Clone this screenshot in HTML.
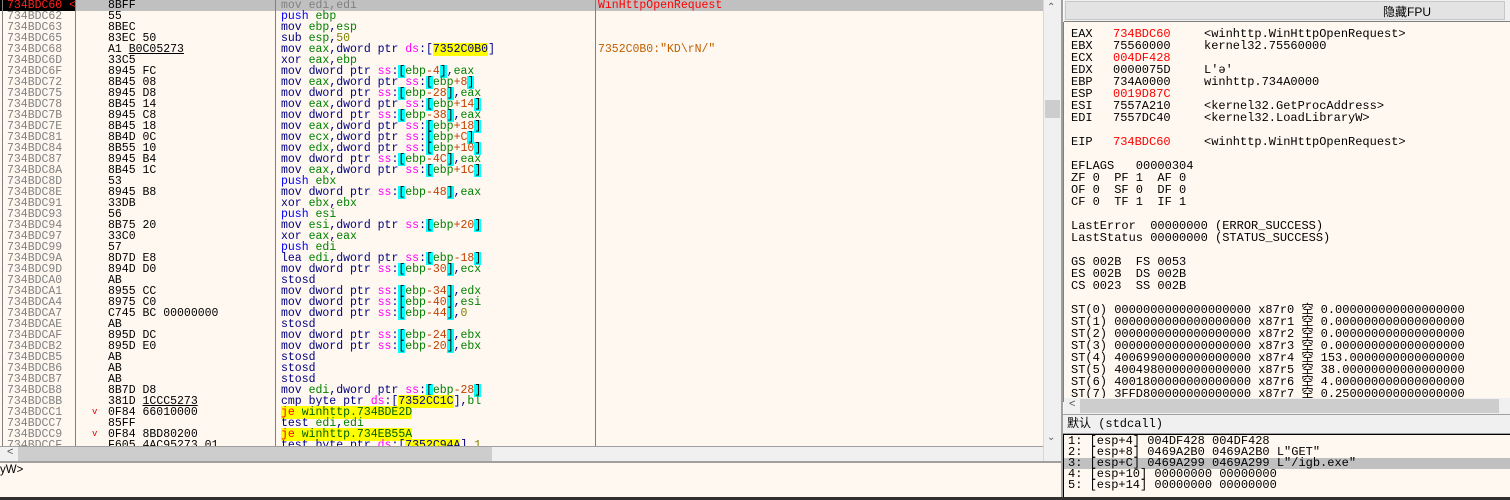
<!DOCTYPE html>
<html><head><meta charset="utf-8"><style>
*{margin:0;padding:0;box-sizing:border-box}
body{width:1510px;height:500px;overflow:hidden;background:#fff8f0;position:relative;font-family:"Liberation Mono","Noto Sans CJK SC",monospace}
.a{position:absolute}
#dis{position:absolute;left:0;top:0;width:1043px;height:446px;overflow:hidden;background:#fff8f0;font-size:11.5px}
.r{position:absolute;left:0;width:1043px;height:11px;line-height:11px;white-space:pre}
.ad{position:absolute;left:7px;color:#808080}
.by{position:absolute;left:108px;color:#000}
.ar{position:absolute;left:92px;color:#e00000;font-size:9px}
.ds{position:absolute;left:281px;color:#000080}
.cm{position:absolute;left:598px}
.g{color:#008000}.p{color:#0000ff}.s{color:#ff00ff}.b{background:#00ffff;color:#000}.o{color:#c04000}.n{color:#808000}.y{background:#ffff00}.j{color:#ff0000;background:#ffff00}.k{color:#006000;background:#ffff00}
.vl{position:absolute;top:0;width:1px;height:446px;background:#808080}
#reg{position:absolute;left:1064px;top:22px;width:446px;height:376px;overflow:hidden;font-size:12px}
.l{position:absolute;height:12px;line-height:12px;white-space:pre}
</style></head><body>
<div id="dis">
<div class="r" style="top:0;background:#c0c0c0"></div>
<div class="a" style="left:0;top:0;width:75px;height:11px;background:#000"></div>
<div class="vl" style="left:2px"></div>
<div class="vl" style="left:75px"></div>
<div class="vl" style="left:275px"></div>
<div class="vl" style="left:595px"></div>

<div class="r" style="top:0"><span class="ad" style="color:#ff2020">734BDC60 &lt;</span><span class="by">8BFF</span><span class="ds" style="color:#808080">mov edi,edi</span><span class="cm" style="color:#ff0000">WinHttpOpenRequest</span></div>
<div class="r" style="top:11px"><span class="ad">734BDC62</span><span class="by">55</span><span class="ds"><span class="p">push</span> <span class="g">ebp</span></span></div>
<div class="r" style="top:22px"><span class="ad">734BDC63</span><span class="by">8BEC</span><span class="ds">mov <span class="g">ebp</span>,<span class="g">esp</span></span></div>
<div class="r" style="top:33px"><span class="ad">734BDC65</span><span class="by">83EC 50</span><span class="ds">sub <span class="g">esp</span>,<span class="n">50</span></span></div>
<div class="r" style="top:44px"><span class="ad">734BDC68</span><span class="by">A1 <u>B0C05273</u></span><span class="ds">mov <span class="g">eax</span>,dword ptr <span class="s">ds</span>:[<span class="y">7352C0B0</span>]</span><span class="cm" style="color:#c06000">7352C0B0:"KD\rN/"</span></div>
<div class="r" style="top:55px"><span class="ad">734BDC6D</span><span class="by">33C5</span><span class="ds">xor <span class="g">eax</span>,<span class="g">ebp</span></span></div>
<div class="r" style="top:66px"><span class="ad">734BDC6F</span><span class="by">8945 FC</span><span class="ds">mov dword ptr <span class="s">ss</span>:<span class="b">[</span><span class="g">ebp</span><span class="o">-4</span><span class="b">]</span>,<span class="g">eax</span></span></div>
<div class="r" style="top:77px"><span class="ad">734BDC72</span><span class="by">8B45 08</span><span class="ds">mov <span class="g">eax</span>,dword ptr <span class="s">ss</span>:<span class="b">[</span><span class="g">ebp</span><span class="o">+8</span><span class="b">]</span></span></div>
<div class="r" style="top:88px"><span class="ad">734BDC75</span><span class="by">8945 D8</span><span class="ds">mov dword ptr <span class="s">ss</span>:<span class="b">[</span><span class="g">ebp</span><span class="o">-28</span><span class="b">]</span>,<span class="g">eax</span></span></div>
<div class="r" style="top:99px"><span class="ad">734BDC78</span><span class="by">8B45 14</span><span class="ds">mov <span class="g">eax</span>,dword ptr <span class="s">ss</span>:<span class="b">[</span><span class="g">ebp</span><span class="o">+14</span><span class="b">]</span></span></div>
<div class="r" style="top:110px"><span class="ad">734BDC7B</span><span class="by">8945 C8</span><span class="ds">mov dword ptr <span class="s">ss</span>:<span class="b">[</span><span class="g">ebp</span><span class="o">-38</span><span class="b">]</span>,<span class="g">eax</span></span></div>
<div class="r" style="top:121px"><span class="ad">734BDC7E</span><span class="by">8B45 18</span><span class="ds">mov <span class="g">eax</span>,dword ptr <span class="s">ss</span>:<span class="b">[</span><span class="g">ebp</span><span class="o">+18</span><span class="b">]</span></span></div>
<div class="r" style="top:132px"><span class="ad">734BDC81</span><span class="by">8B4D 0C</span><span class="ds">mov <span class="g">ecx</span>,dword ptr <span class="s">ss</span>:<span class="b">[</span><span class="g">ebp</span><span class="o">+C</span><span class="b">]</span></span></div>
<div class="r" style="top:143px"><span class="ad">734BDC84</span><span class="by">8B55 10</span><span class="ds">mov <span class="g">edx</span>,dword ptr <span class="s">ss</span>:<span class="b">[</span><span class="g">ebp</span><span class="o">+10</span><span class="b">]</span></span></div>
<div class="r" style="top:154px"><span class="ad">734BDC87</span><span class="by">8945 B4</span><span class="ds">mov dword ptr <span class="s">ss</span>:<span class="b">[</span><span class="g">ebp</span><span class="o">-4C</span><span class="b">]</span>,<span class="g">eax</span></span></div>
<div class="r" style="top:165px"><span class="ad">734BDC8A</span><span class="by">8B45 1C</span><span class="ds">mov <span class="g">eax</span>,dword ptr <span class="s">ss</span>:<span class="b">[</span><span class="g">ebp</span><span class="o">+1C</span><span class="b">]</span></span></div>
<div class="r" style="top:176px"><span class="ad">734BDC8D</span><span class="by">53</span><span class="ds"><span class="p">push</span> <span class="g">ebx</span></span></div>
<div class="r" style="top:187px"><span class="ad">734BDC8E</span><span class="by">8945 B8</span><span class="ds">mov dword ptr <span class="s">ss</span>:<span class="b">[</span><span class="g">ebp</span><span class="o">-48</span><span class="b">]</span>,<span class="g">eax</span></span></div>
<div class="r" style="top:198px"><span class="ad">734BDC91</span><span class="by">33DB</span><span class="ds">xor <span class="g">ebx</span>,<span class="g">ebx</span></span></div>
<div class="r" style="top:209px"><span class="ad">734BDC93</span><span class="by">56</span><span class="ds"><span class="p">push</span> <span class="g">esi</span></span></div>
<div class="r" style="top:220px"><span class="ad">734BDC94</span><span class="by">8B75 20</span><span class="ds">mov <span class="g">esi</span>,dword ptr <span class="s">ss</span>:<span class="b">[</span><span class="g">ebp</span><span class="o">+20</span><span class="b">]</span></span></div>
<div class="r" style="top:231px"><span class="ad">734BDC97</span><span class="by">33C0</span><span class="ds">xor <span class="g">eax</span>,<span class="g">eax</span></span></div>
<div class="r" style="top:242px"><span class="ad">734BDC99</span><span class="by">57</span><span class="ds"><span class="p">push</span> <span class="g">edi</span></span></div>
<div class="r" style="top:253px"><span class="ad">734BDC9A</span><span class="by">8D7D E8</span><span class="ds">lea <span class="g">edi</span>,dword ptr <span class="s">ss</span>:<span class="b">[</span><span class="g">ebp</span><span class="o">-18</span><span class="b">]</span></span></div>
<div class="r" style="top:264px"><span class="ad">734BDC9D</span><span class="by">894D D0</span><span class="ds">mov dword ptr <span class="s">ss</span>:<span class="b">[</span><span class="g">ebp</span><span class="o">-30</span><span class="b">]</span>,<span class="g">ecx</span></span></div>
<div class="r" style="top:275px"><span class="ad">734BDCA0</span><span class="by">AB</span><span class="ds">stosd</span></div>
<div class="r" style="top:286px"><span class="ad">734BDCA1</span><span class="by">8955 CC</span><span class="ds">mov dword ptr <span class="s">ss</span>:<span class="b">[</span><span class="g">ebp</span><span class="o">-34</span><span class="b">]</span>,<span class="g">edx</span></span></div>
<div class="r" style="top:297px"><span class="ad">734BDCA4</span><span class="by">8975 C0</span><span class="ds">mov dword ptr <span class="s">ss</span>:<span class="b">[</span><span class="g">ebp</span><span class="o">-40</span><span class="b">]</span>,<span class="g">esi</span></span></div>
<div class="r" style="top:308px"><span class="ad">734BDCA7</span><span class="by">C745 BC 00000000</span><span class="ds">mov dword ptr <span class="s">ss</span>:<span class="b">[</span><span class="g">ebp</span><span class="o">-44</span><span class="b">]</span>,<span class="n">0</span></span></div>
<div class="r" style="top:319px"><span class="ad">734BDCAE</span><span class="by">AB</span><span class="ds">stosd</span></div>
<div class="r" style="top:330px"><span class="ad">734BDCAF</span><span class="by">895D DC</span><span class="ds">mov dword ptr <span class="s">ss</span>:<span class="b">[</span><span class="g">ebp</span><span class="o">-24</span><span class="b">]</span>,<span class="g">ebx</span></span></div>
<div class="r" style="top:341px"><span class="ad">734BDCB2</span><span class="by">895D E0</span><span class="ds">mov dword ptr <span class="s">ss</span>:<span class="b">[</span><span class="g">ebp</span><span class="o">-20</span><span class="b">]</span>,<span class="g">ebx</span></span></div>
<div class="r" style="top:352px"><span class="ad">734BDCB5</span><span class="by">AB</span><span class="ds">stosd</span></div>
<div class="r" style="top:363px"><span class="ad">734BDCB6</span><span class="by">AB</span><span class="ds">stosd</span></div>
<div class="r" style="top:374px"><span class="ad">734BDCB7</span><span class="by">AB</span><span class="ds">stosd</span></div>
<div class="r" style="top:385px"><span class="ad">734BDCB8</span><span class="by">8B7D D8</span><span class="ds">mov <span class="g">edi</span>,dword ptr <span class="s">ss</span>:<span class="b">[</span><span class="g">ebp</span><span class="o">-28</span><span class="b">]</span></span></div>
<div class="r" style="top:396px"><span class="ad">734BDCBB</span><span class="by">381D <u>1CCC5273</u></span><span class="ds">cmp byte ptr <span class="s">ds</span>:[<span class="y">7352CC1C</span>],<span class="g">bl</span></span></div>
<div class="r" style="top:407px"><span class="ad">734BDCC1</span><span class="ar">v</span><span class="by">0F84 66010000</span><span class="ds"><span class="j">je</span><span class="y"> </span><span class="k">winhttp.734BDE2D</span></span></div>
<div class="r" style="top:418px"><span class="ad">734BDCC7</span><span class="by">85FF</span><span class="ds">test <span class="g">edi</span>,<span class="g">edi</span></span></div>
<div class="r" style="top:429px"><span class="ad">734BDCC9</span><span class="ar">v</span><span class="by">0F84 8BD80200</span><span class="ds"><span class="j">je</span><span class="y"> </span><span class="k">winhttp.734EB55A</span></span></div>
<div class="r" style="top:440px"><span class="ad">734BDCCF</span><span class="by">F605 4AC95273 01</span><span class="ds">test byte ptr <span class="s">ds</span>:[<span class="y">7352C94A</span>],<span class="n">1</span></span></div>
</div>

<!-- disasm vertical scrollbar -->
<div class="a" style="left:1043px;top:0;width:18px;height:461px;background:#f0f0f0;border-left:1px solid #d8d8d8"></div>
<div class="a" style="left:1047px;top:2px;font-size:10px;color:#606060;font-family:'Liberation Sans',sans-serif">&#8963;</div>
<div class="a" style="left:1045px;top:100px;width:15px;height:18px;background:#cdcdcd"></div>
<div class="a" style="left:1047px;top:432px;font-size:10px;color:#606060;font-family:'Liberation Sans',sans-serif">&#8964;</div>
<div class="a" style="left:1061px;top:0;width:2px;height:500px;background:#a0a0a0"></div>

<!-- horizontal scrollbar -->
<div class="a" style="left:0;top:446px;width:1043px;height:15px;background:#f0f0f0;border-top:1px solid #a0a0a0"></div>
<div class="a" style="left:7px;top:446px;font-size:11px;color:#505050;font-family:'Liberation Sans',sans-serif">&lt;</div>
<div class="a" style="left:18px;top:447px;width:474px;height:14px;background:#cdcdcd"></div>
<div class="a" style="left:0;top:461px;width:1061px;height:2px;background:#a0a0a0"></div>
<div class="a" style="left:0;top:465px;font-size:11.5px;line-height:11px;color:#000;font-family:'Liberation Sans',sans-serif">yW&gt;</div>
<div class="a" style="left:0;top:497px;width:1510px;height:3px;background:#303030"></div>

<!-- right panel header -->
<div class="a" style="left:1064px;top:0;width:446px;height:22px;background:#f0f0f0;border-bottom:1px solid #808080"></div>
<div class="a" style="left:1065px;top:1px;width:440px;height:19px;background:#e3e3e3;border:1px solid #c8c8c8"></div>
<div class="a" style="left:1383px;top:3px;font-size:12px;font-family:'Liberation Sans','Noto Sans CJK SC',sans-serif">隐藏FPU</div>
<div class="a" style="left:1063px;top:22px;width:1px;height:380px;background:#808080"></div>

<div id="reg">
<div class="l" style="left:7px;top:6px">EAX</div><div class="l" style="left:49px;top:6px;color:#ff0000">734BDC60</div><div class="l" style="left:140px;top:6px">&lt;winhttp.WinHttpOpenRequest&gt;</div>
<div class="l" style="left:7px;top:18px">EBX</div><div class="l" style="left:49px;top:18px">75560000</div><div class="l" style="left:140px;top:18px">kernel32.75560000</div>
<div class="l" style="left:7px;top:30px">ECX</div><div class="l" style="left:49px;top:30px;color:#ff0000">004DF428</div>
<div class="l" style="left:7px;top:42px">EDX</div><div class="l" style="left:49px;top:42px">0000075D</div><div class="l" style="left:140px;top:42px">L'ǝ'</div>
<div class="l" style="left:7px;top:54px">EBP</div><div class="l" style="left:49px;top:54px">734A0000</div><div class="l" style="left:140px;top:54px">winhttp.734A0000</div>
<div class="l" style="left:7px;top:66px">ESP</div><div class="l" style="left:49px;top:66px;color:#ff0000">0019D87C</div>
<div class="l" style="left:7px;top:78px">ESI</div><div class="l" style="left:49px;top:78px">7557A210</div><div class="l" style="left:140px;top:78px">&lt;kernel32.GetProcAddress&gt;</div>
<div class="l" style="left:7px;top:90px">EDI</div><div class="l" style="left:49px;top:90px">7557DC40</div><div class="l" style="left:140px;top:90px">&lt;kernel32.LoadLibraryW&gt;</div>
<div class="l" style="left:7px;top:114px">EIP</div><div class="l" style="left:49px;top:114px;color:#ff0000">734BDC60</div><div class="l" style="left:140px;top:114px">&lt;winhttp.WinHttpOpenRequest&gt;</div>
<div class="l" style="left:7px;top:138px">EFLAGS   00000304</div>
<div class="l" style="left:7px;top:150px">ZF 0  PF 1  AF 0</div>
<div class="l" style="left:7px;top:162px">OF 0  SF 0  DF 0</div>
<div class="l" style="left:7px;top:174px">CF 0  TF 1  IF 1</div>
<div class="l" style="left:7px;top:198px">LastError  00000000 (ERROR_SUCCESS)</div>
<div class="l" style="left:7px;top:210px">LastStatus 00000000 (STATUS_SUCCESS)</div>
<div class="l" style="left:7px;top:234px">GS 002B  FS 0053</div>
<div class="l" style="left:7px;top:246px">ES 002B  DS 002B</div>
<div class="l" style="left:7px;top:258px">CS 0023  SS 002B</div>
<div class="l" style="left:7px;top:282px">ST(0) 0000000000000000000 x87r0 空 0.000000000000000000</div>
<div class="l" style="left:7px;top:294px">ST(1) 0000000000000000000 x87r1 空 0.000000000000000000</div>
<div class="l" style="left:7px;top:306px">ST(2) 0000000000000000000 x87r2 空 0.000000000000000000</div>
<div class="l" style="left:7px;top:318px">ST(3) 0000000000000000000 x87r3 空 0.000000000000000000</div>
<div class="l" style="left:7px;top:330px">ST(4) 4006990000000000000 x87r4 空 153.0000000000000000</div>
<div class="l" style="left:7px;top:342px">ST(5) 4004980000000000000 x87r5 空 38.00000000000000000</div>
<div class="l" style="left:7px;top:354px">ST(6) 4001800000000000000 x87r6 空 4.000000000000000000</div>
<div class="l" style="left:7px;top:366px">ST(7) 3FFD800000000000000 x87r7 空 0.250000000000000000</div>
</div>

<!-- right horizontal scrollbar -->
<div class="a" style="left:1064px;top:398px;width:446px;height:16px;background:#f0f0f0"></div>
<div class="a" style="left:1069px;top:398px;font-size:11px;color:#505050;font-family:'Liberation Sans',sans-serif">&lt;</div>
<div class="a" style="left:1080px;top:399px;width:419px;height:14px;background:#cdcdcd"></div>
<div class="a" style="left:1063px;top:414px;width:447px;height:20px;background:#f0f0f0;border-top:1px solid #a0a0a0;border-bottom:1px solid #a0a0a0"></div>
<div class="a" style="left:1067px;top:417px;font-size:12px;line-height:14px;font-family:'Liberation Mono','Noto Sans CJK SC',monospace">默认 (stdcall)</div>
<div class="a" style="left:1063px;top:434px;width:447px;height:63px;border-left:1px solid #000;border-top:1px solid #000"></div>
<div class="a" style="left:1064px;top:458px;width:446px;height:11px;background:#c0c0c0"></div>
<div class="a" style="left:1068px;top:436px;font-size:12px;line-height:11px;white-space:pre">1: [esp+4] 004DF428 004DF428
2: [esp+8] 0469A2B0 0469A2B0 L"GET"
3: [esp+C] 0469A299 0469A299 L"/igb.exe"
4: [esp+10] 00000000 00000000
5: [esp+14] 00000000 00000000</div>
</body></html>
